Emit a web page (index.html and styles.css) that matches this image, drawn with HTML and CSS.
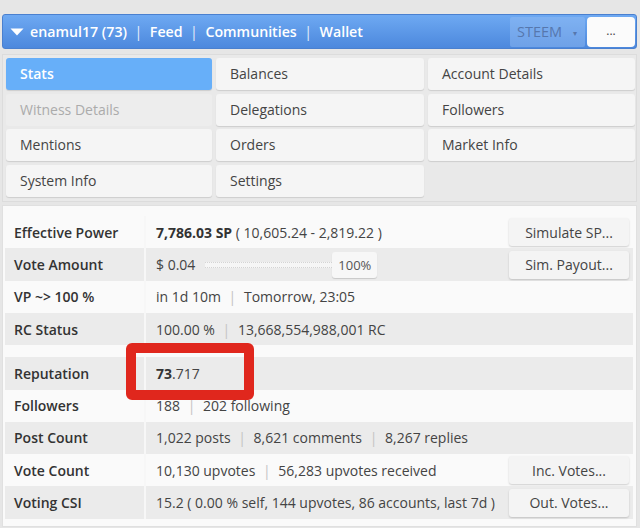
FILE: index.html
```html
<!DOCTYPE html>
<html>
<head>
<meta charset="utf-8">
<link rel="stylesheet" href="styles.css">
</head>
<body>
<div class="page">
  <header class="topbar">
    <div class="nav">
      <svg class="caret" width="14" height="8" viewBox="0 0 14 8"><path d="M0.5 0.5 L13.5 0.5 L7 7.5 Z" fill="#fff"/></svg>
      <span class="link">enamul17 (73)</span>
      <span class="sep">|</span>
      <span class="link">Feed</span>
      <span class="sep">|</span>
      <span class="link">Communities</span>
      <span class="sep">|</span>
      <span class="link">Wallet</span>
    </div>
    <div class="tools">
      <div class="select">STEEM <span class="tri">▾</span></div>
      <div class="more">...</div>
    </div>
  </header>

  <nav class="tabs">
    <div class="tab active">Stats</div>
    <div class="tab">Balances</div>
    <div class="tab">Account Details</div>
    <div class="tab disabled">Witness Details</div>
    <div class="tab">Delegations</div>
    <div class="tab">Followers</div>
    <div class="tab">Mentions</div>
    <div class="tab">Orders</div>
    <div class="tab">Market Info</div>
    <div class="tab">System Info</div>
    <div class="tab">Settings</div>
  </nav>

  <section class="stats">
    <div class="table">
      <div class="row light">
        <div class="label">Effective Power</div>
        <div class="value"><span><b>7,786.03 SP</b> ( 10,605.24 - 2,819.22 )</span><button class="btn">Simulate SP...</button></div>
      </div>
      <div class="row dark">
        <div class="label">Vote Amount</div>
        <div class="value">
          <span class="amount">$ 0.04</span>
          <span class="track"></span>
          <span class="pct">100%</span>
          <button class="btn push">Sim. Payout...</button>
        </div>
      </div>
      <div class="row light">
        <div class="label">VP ~&gt; 100 %</div>
        <div class="value"><span>in 1d 10m <i class="bar">|</i> Tomorrow, 23:05</span></div>
      </div>
      <div class="row dark">
        <div class="label">RC Status</div>
        <div class="value"><span>100.00 % <i class="bar">|</i> 13,668,554,988,001 RC</span></div>
      </div>
    </div>

    <div class="table">
      <div class="row dark">
        <div class="label">Reputation</div>
        <div class="value"><span><b>73</b>.717</span></div>
      </div>
      <div class="row light">
        <div class="label">Followers</div>
        <div class="value"><span>188 <i class="bar">|</i> 202 following</span></div>
      </div>
      <div class="row dark">
        <div class="label">Post Count</div>
        <div class="value"><span>1,022 posts <i class="bar">|</i> 8,621 comments <i class="bar">|</i> 8,267 replies</span></div>
      </div>
      <div class="row light">
        <div class="label">Vote Count</div>
        <div class="value"><span>10,130 upvotes <i class="bar">|</i> 56,283 upvotes received</span><button class="btn">Inc. Votes...</button></div>
      </div>
      <div class="row dark">
        <div class="label">Voting CSI</div>
        <div class="value"><span>15.2 ( 0.00 % self, 144 upvotes, 86 accounts, last 7d )</span><button class="btn">Out. Votes...</button></div>
      </div>
    </div>
  </section>

  <div class="highlight"></div>
</div>
</body>
</html>
```

FILE: styles.css
```css
* { box-sizing: border-box; }

html, body {
  margin: 0;
  padding: 0;
  background: #e6e6e6;
  font-family: "Open Sans", "Noto Sans", "Liberation Sans", sans-serif;
  color: #333;
}

.page {
  position: relative;
  width: 640px;
  height: 528px;
  padding: 14px 3px 0 2px;
  overflow: hidden;
}

.topbar {
  height: 35px;
  display: flex;
  align-items: center;
  justify-content: space-between;
  background: linear-gradient(#6ea9f2, #4c88dd);
  border: 1px solid #4a80cf;
  border-radius: 3px;
  padding: 0 1px 0 7px;
}

.nav {
  display: flex;
  align-items: center;
  color: #fff;
  font-size: 14.2px;
  font-weight: 600;
}

.caret { margin-right: 6px; margin-top: 1px; }

.sep {
  font-weight: 400;
  margin: 0 7.5px;
  opacity: 0.85;
}

.tools {
  display: flex;
  align-items: center;
  gap: 2px;
  height: 100%;
}

.select {
  height: 30px;
  width: 75px;
  background: rgba(150, 190, 245, 0.45);
  color: #5677ad;
  font-size: 14.5px;
  display: flex;
  align-items: center;
  padding-left: 7px;
  border-radius: 2px;
}

.tri {
  font-size: 8px;
  margin-left: 11px;
  margin-top: 1px;
}

.more {
  width: 48px;
  height: 30px;
  background: #fbfbfb;
  border-radius: 4px;
  color: #444;
  font-size: 12px;
  display: flex;
  align-items: center;
  justify-content: center;
  padding-bottom: 2px;
}

.tabs {
  margin-top: 5px;
  background: #e9e9e9;
  border: 1px solid #dcdcdc;
  padding: 3px 3px 4px 3px;
  display: grid;
  grid-template-columns: 206px 208px 207px;
  column-gap: 4px;
  row-gap: 3.7px;
}

.tab {
  height: 32px;
  background: #f5f5f5;
  border-radius: 3px;
  box-shadow: 0 1px 1px rgba(0,0,0,0.12);
  font-size: 14px;
  color: #444;
  display: flex;
  align-items: center;
  padding-left: 14px;
  padding-bottom: 1px;
}

.tab.active {
  background: #67aff9;
  color: #fff;
  font-weight: 600;
}

.tab.disabled {
  background: #ededed;
  color: #ababab;
  box-shadow: none;
}

.stats {
  margin-top: 3px;
  background: #fafafa;
  border: 1px solid #e0e0e0;
  padding: 10px 3px 6px 2px;
  display: flex;
  flex-direction: column;
  gap: 12px;
  height: 322px;
}

.table {
  display: flex;
  flex-direction: column;
}

.row {
  height: 32.3px;
  display: flex;
  align-items: stretch;
  font-size: 14px;
}

.row.light { background: #fafafa; }
.row.dark { background: #ebebeb; }

.label {
  width: 141px;
  padding-left: 9px;
  display: flex;
  align-items: center;
  font-weight: 600;
  color: #333;
  border-right: 2px solid #f7f7f7;
}

.value {
  flex: 1;
  display: flex;
  align-items: center;
  padding-left: 10px;
  padding-right: 4px;
  color: #444;
}

.value > span:first-child { flex: 1; }
.value > span.amount { flex: none; }

.value b { font-weight: 700; color: #333; }

.bar {
  font-style: normal;
  color: #c4c4c4;
  margin: 0 4px;
}

.track {
  width: 127px;
  height: 6px;
  margin-left: 10px;
  border-top: 1px dotted #d4d4d4;
  border-bottom: 1px dotted #d4d4d4;
  background: #f6f6f6;
}

.pct {
  height: 26px;
  width: 45px;
  background: #f7f7f7;
  border-radius: 3px;
  box-shadow: 0 1px 1px rgba(0,0,0,0.15);
  font-size: 13px;
  color: #555;
  display: flex;
  align-items: center;
  justify-content: center;
}

.push { margin-left: auto; }

.btn {
  width: 120px;
  height: 28px;
  border: none;
  background: #f4f4f4;
  border-radius: 3px;
  box-shadow: 0 1px 2px rgba(0,0,0,0.18);
  font-family: inherit;
  font-size: 14px;
  color: #444;
  padding: 0;
}

.highlight {
  position: absolute;
  left: 126px;
  top: 343px;
  width: 128px;
  height: 57px;
  border: 10px solid #e0271d;
  border-radius: 6px;
}
```
